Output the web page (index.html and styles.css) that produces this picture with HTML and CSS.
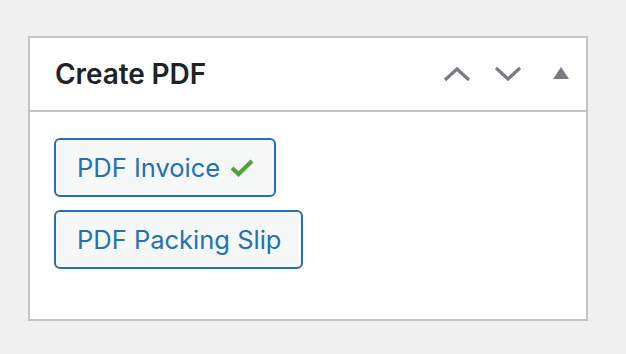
FILE: index.html
```html
<!DOCTYPE html>
<html lang="en">
<head>
    <meta charset="UTF-8">
    <meta name="viewport" content="width=device-width, initial-scale=1.0">
    <title>Create PDF</title>
    <link rel="stylesheet" href="styles.css">
</head>
<body>
    <!-- Meta box -->
    <div class="postbox">
        <div class="postbox-header">
            <h2>Create PDF</h2>
            <div class="handle-actions">
                <button class="handle-btn" aria-label="Move up">
                    <svg width="28" height="16" viewBox="0 0 28 16"><polyline points="2,14 14,3 26,14" fill="none" stroke="#787c82" stroke-width="3.2"/></svg>
                </button>
                <button class="handle-btn" aria-label="Move down">
                    <svg width="28" height="16" viewBox="0 0 28 16"><polyline points="2,2 14,13 26,2" fill="none" stroke="#787c82" stroke-width="3.2"/></svg>
                </button>
                <button class="handle-btn toggle" aria-label="Toggle panel">
                    <svg width="16" height="12" viewBox="0 0 16 12"><polygon points="8,0 16,12 0,12" fill="#787c82"/></svg>
                </button>
            </div>
        </div>
        <div class="inside">
            <a class="pdf-button" href="#">PDF Invoice
                <svg class="done" width="24" height="18" viewBox="0 0 24 18"><polyline points="2,9 8.5,15 22,2" fill="none" stroke="#4fa33a" stroke-width="4.2"/></svg>
            </a>
            <a class="pdf-button" href="#">PDF Packing Slip</a>
        </div>
    </div>
</body>
</html>
```

FILE: styles.css
```css
* {
    margin: 0;
    padding: 0;
    box-sizing: border-box;
}
body {
    background-color: #f0f0f1;
    font-family: Inter, "Noto Sans", sans-serif;
    color: #1d2327;
    padding: 36px 0 0 28px;
}
.postbox {
    width: 560px;
    height: 285px;
    background-color: #fff;
    border: 2px solid #c3c4c7;
    box-shadow: 0 2px 2px rgba(0, 0, 0, 0.04);
}
.postbox-header {
    height: 74px;
    border-bottom: 2px solid #c3c4c7;
    display: flex;
    align-items: center;
    justify-content: space-between;
    padding: 0 17px 0 25px;
}
.postbox-header h2 {
    font-size: 28px;
    font-weight: 600;
    letter-spacing: -0.1px;
}
.handle-actions {
    display: flex;
    align-items: center;
    gap: 23px;
}
.handle-btn {
    background: none;
    border: none;
    display: flex;
    align-items: center;
    cursor: pointer;
}
.handle-btn.toggle {
    margin-left: 8px;
    margin-bottom: 2px;
}
/* Buttons */
.inside {
    display: flex;
    flex-direction: column;
    align-items: flex-start;
    gap: 13px;
    padding: 26px 24px 0 24px;
}
.pdf-button {
    display: inline-flex;
    align-items: center;
    height: 59px;
    padding: 0 20px 0 21px;
    background-color: #f6f7f7;
    border: 2px solid #2271b1;
    border-radius: 6px;
    color: #2271b1;
    font-size: 25.5px;
    text-decoration: none;
}
.pdf-button .done {
    margin-left: 10px;
}
```
